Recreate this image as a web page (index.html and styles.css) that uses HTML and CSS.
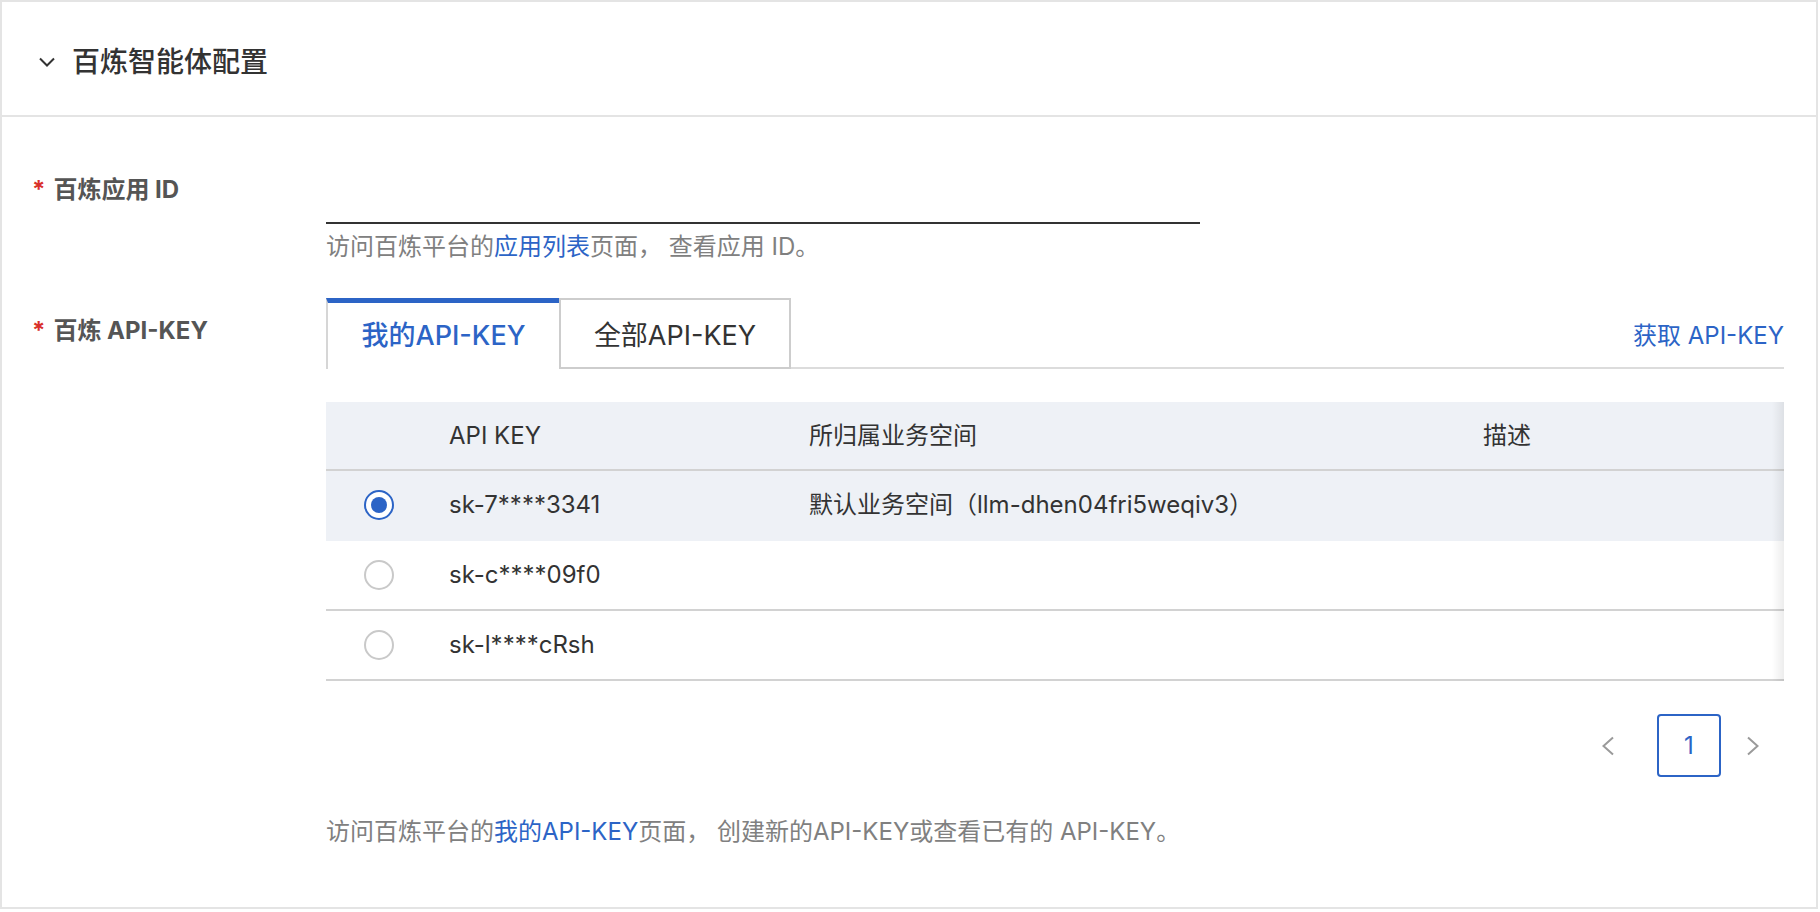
FILE: index.html
```html
<!DOCTYPE html>
<html lang="zh-CN">
<head>
<meta charset="utf-8">
<title>百炼智能体配置</title>
<link rel="stylesheet" href="styles.css">
</head>
<body>
<section class="panel">
  <header class="panel-header">
    <svg class="chevron" width="16" height="10" viewBox="0 0 16 10"><polyline points="1,1.5 8,8.5 15,1.5" fill="none" stroke="#333" stroke-width="2"/></svg>
    <h2 class="panel-title">百炼智能体配置</h2>
  </header>
  <div class="panel-body">
    <div class="form-row">
      <label class="form-label"><span class="star">*</span>百炼应用 ID</label>
      <div class="form-control">
        <div class="text-input"></div>
        <p class="help">访问百炼平台的<a class="link">应用列表</a>页面， 查看应用 ID。</p>
      </div>
    </div>
    <div class="form-row row-key">
      <label class="form-label label-key"><span class="star">*</span>百炼 API-KEY</label>
      <div class="form-control">
        <div class="tabbar">
          <div class="tab tab-active">我的API-KEY</div>
          <div class="tab">全部API-KEY</div>
          <a class="link tab-link">获取 API-KEY</a>
        </div>
        <div class="table-wrap">
          <div class="trow thead">
            <div class="cell c-radio"></div>
            <div class="cell c-key">API KEY</div>
            <div class="cell c-space">所归属业务空间</div>
            <div class="cell c-desc">描述</div>
          </div>
          <div class="trow selected">
            <div class="cell c-radio"><span class="radio checked"></span></div>
            <div class="cell c-key">sk-7****3341</div>
            <div class="cell c-space">默认业务空间（llm-dhen04fri5weqiv3）</div>
            <div class="cell c-desc"></div>
          </div>
          <div class="trow">
            <div class="cell c-radio"><span class="radio"></span></div>
            <div class="cell c-key">sk-c****09f0</div>
            <div class="cell c-space"></div>
            <div class="cell c-desc"></div>
          </div>
          <div class="trow">
            <div class="cell c-radio"><span class="radio"></span></div>
            <div class="cell c-key">sk-l****cRsh</div>
            <div class="cell c-space"></div>
            <div class="cell c-desc"></div>
          </div>
        </div>
        <nav class="pager">
          <span class="pg-arrow pg-prev"><svg width="14" height="20" viewBox="0 0 14 20"><polyline points="12,1.5 2.5,10 12,18.5" fill="none" stroke="#9a9a9a" stroke-width="2"/></svg></span>
          <span class="pg-num">1</span>
          <span class="pg-arrow pg-next"><svg width="14" height="20" viewBox="0 0 14 20"><polyline points="2,1.5 11.5,10 2,18.5" fill="none" stroke="#9a9a9a" stroke-width="2"/></svg></span>
        </nav>
        <p class="help help-bottom">访问百炼平台的<a class="link">我的API-KEY</a>页面， 创建新的API-KEY或查看已有的 API-KEY。</p>
      </div>
    </div>
  </div>
</section>
</body>
</html>
```
FILE: styles.css
```css
* { box-sizing: border-box; }
html, body { margin: 0; padding: 0; background: #fff; }
body {
  font-family: Inter, "Noto Sans CJK SC", sans-serif;
  font-size: 24px;
  color: #333;
}
.panel {
  width: 1818px;
  height: 909px;
  border: 2px solid #e4e4e4;
}
.panel-header {
  height: 115px;
  border-bottom: 2px solid #e4e4e4;
  display: flex;
  align-items: center;
  padding: 7px 0 0 37px;
}
.chevron { display: block; margin-right: 17px; }
.panel-title {
  margin: 0;
  font-size: 28px;
  font-weight: 500;
  color: #333;
  line-height: 36px;
}
.panel-body {
  padding: 55px 32px 0 30px;
}
.form-row {
  display: grid;
  grid-template-columns: 294px 1458px;
}
.row-key { margin-top: 33px; }
.form-label {
  font-weight: 700;
  color: #555;
  line-height: 36px;
  font-size: 24px;
}
.label-key { padding-top: 15px; }
.star {
  color: #d9302a;
  margin-right: 8px;
  font-weight: 700;
}
.text-input {
  width: 874px;
  height: 52px;
  border-bottom: 2px solid #333;
}
.help {
  margin: 5px 0 0;
  line-height: 36px;
  color: #808080;
  font-size: 24px;
}
.link { color: #2c64c6; text-decoration: none; }
.tabbar {
  display: flex;
  align-items: stretch;
  height: 71px;
  border-bottom: 2px solid #dcdcdc;
}
.tab {
  width: 232px;
  display: flex;
  align-items: center;
  justify-content: center;
  font-size: 27px;
  color: #333;
  border: 2px solid #cdcdcd;
  margin-bottom: -2px;
  background: #fff;
}
.tab-active {
  width: 233px;
  color: #2c64c6;
  font-weight: 500;
  border: none;
  border-left: 2px solid #d6d6d6;
  border-top: 5px solid #2c64c6;
  padding-bottom: 5px;
}
.tab-link {
  margin-left: auto;
  align-self: center;
  padding-top: 2px;
}
.table-wrap {
  margin-top: 33px;
  position: relative;
}
.table-wrap::after {
  content: "";
  position: absolute;
  top: 0; right: 0; bottom: 0;
  width: 12px;
  background: linear-gradient(to right, rgba(0,0,0,0), rgba(0,0,0,0.07));
}
.trow {
  display: flex;
  height: 70px;
  border-bottom: 2px solid #d2d2d2;
  align-items: center;
}
.thead {
  height: 69px;
  background: #eef1f6;
}
.trow.selected {
  background: #eef1f6;
  border-bottom-color: #eef1f6;
}
.cell { padding-left: 17px; line-height: 36px; }
.c-radio { width: 106px; padding-left: 0; display: flex; justify-content: center; }
.c-key { width: 360px; }
.c-space { width: 674px; }
.c-desc { width: 318px; }
.radio {
  width: 30px;
  height: 30px;
  border-radius: 50%;
  border: 2px solid #c9c9c9;
  background: #fff;
  display: flex;
  align-items: center;
  justify-content: center;
}
.radio.checked { border-color: #2c64c6; }
.radio.checked::before {
  content: "";
  width: 16px;
  height: 16px;
  border-radius: 50%;
  background: #2c64c6;
}
.pager {
  margin-top: 33px;
  display: flex;
  justify-content: flex-end;
  align-items: center;
  height: 63px;
  padding-right: 11px;
}
.pg-arrow { width: 40px; display: flex; justify-content: center; }
.pg-prev { margin-right: 29px; }
.pg-next { margin-left: 12px; }
.pg-num {
  width: 64px;
  height: 63px;
  border: 2px solid #2c64c6;
  border-radius: 4px;
  color: #2c64c6;
  display: flex;
  align-items: center;
  justify-content: center;
}
.help-bottom { margin-top: 37px; }
```
